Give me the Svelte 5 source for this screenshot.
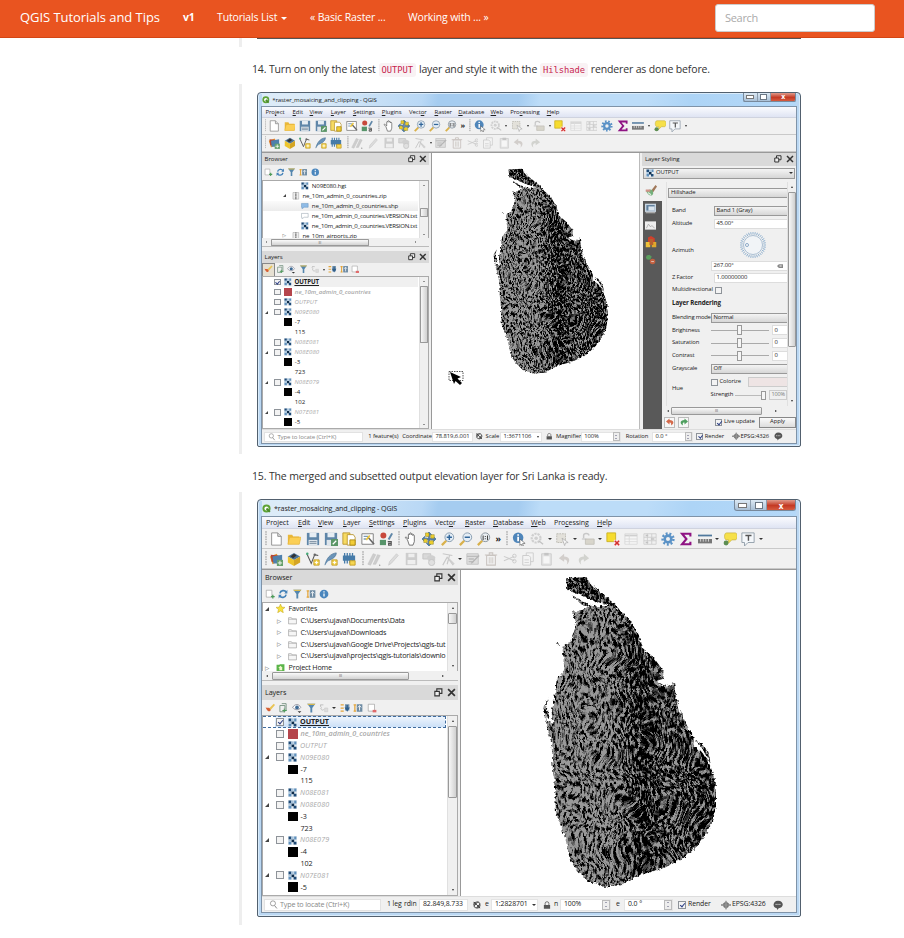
<script>
  const paths = {
    doc: '<path d="M3 1h7l4 4v10H3z" fill="#fff" stroke="#8a8a8a"/><path d="M10 1v4h4" fill="#ddd" stroke="#8a8a8a"/>',
    folder: '<path d="M1 3h5l1 2h7v9H1z" fill="#e9b83a"/><path d="M1 14l2-8h13l-2 8z" fill="#fbcf55" stroke="#e3ad2c" stroke-width=".6"/>',
    save: '<path d="M1 1h14v14H1z" fill="#5f86a8"/><path d="M4 1h8v5H4z" fill="#e6edf3"/><path d="M3 9h10v6H3z" fill="#dfe6ec"/><path d="M4 11h8M4 13h8" stroke="#6c8296"/>',
    saveas: '<path d="M1 1h14v14H1z" fill="#5f86a8"/><path d="M4 1h8v5H4z" fill="#e6edf3"/><path d="M3 9h10v6H3z" fill="#dfe6ec"/><path d="M8 8h8v8H8z" fill="#5c9667"/><path d="M10 14l4-4" stroke="#fff" stroke-width="1.5"/>',
    layout: '<path d="M1 1h8v13H1z" fill="#f7db63" stroke="#b9962d"/><path d="M6 3h7l2 3v9H6z" fill="#fff" stroke="#b9962d"/><path d="M9 9h6v6H9z" fill="#f2cd36" stroke="#a98816"/>',
    layoutmgr: '<path d="M1 2h13v12H1z" fill="#fff" stroke="#777"/><path d="M3 5h5M3 8h3" stroke="#7c9bb5" stroke-width="1.5"/><path d="M8 6l7 8" stroke="#666" stroke-width="1.800"/><path d="M6 9l4-5" stroke="#e9c33a" stroke-width="2"/>',
    style: '<circle cx="5" cy="4" r="3.4" fill="#c8493c"/><path d="M1 9h7v6H1z" fill="#57946a"/><path d="M10 8l4-7 2 1-4 7z" fill="#6087a8"/><path d="M10 11h4v4h-3v-2h3" fill="none" stroke="#555" stroke-width="1.3"/>',
    hand: '<path d="M4 9L2 7c-1-1 0-2 1-1l2 2V3c0-1.300 1.500-1.300 1.600 0V2c0-1.400 1.800-1.400 1.800 0v1c0-1.300 1.700-1.200 1.700 0v1c0-1.200 1.700-1.200 1.700.2V11l-1.500 4H6z" fill="#fff" stroke="#555" stroke-width=".9"/>',
    pan: '<path d="M8 0l3 3H9v3H7V3H5zM8 16l3-3H9v-3H7v3H5zM0 8l3-3v2h3v2H3v2zM16 8l-3-3v2h-3v2h3v2z" fill="#4f7ca6" stroke="#4f7ca6"/><path d="M4 1h4v4H4zM10 3h4v4h-4zM2 8h4v4H2zM8 10h5v4H8z" fill="#efd02b" stroke="#8d8530" stroke-width=".6"/><path d="M6 8h4M8 6v4" stroke="#486e92" stroke-width="1.500"/>',
    zin: '<path d="M1 15l5-5" stroke="#d9b14b" stroke-width="2.600"/><circle cx="9.500" cy="6" r="5" fill="#e5eef6" stroke="#7f95a8"/><path d="M6.500 6h6M9.500 3v6" stroke="#31669a" stroke-width="1.700"/>',
    zout: '<path d="M1 15l5-5" stroke="#d9b14b" stroke-width="2.600"/><circle cx="9.500" cy="6" r="5" fill="#e5eef6" stroke="#7f95a8"/><path d="M6.500 6h6" stroke="#31669a" stroke-width="1.700"/>',
    znat: '<path d="M1 15l5-5" stroke="#d9b14b" stroke-width="2.600"/><circle cx="9.500" cy="6" r="5" fill="#e9eef2" stroke="#7f8a94"/><path d="M7 4v5M12 4v5M9.500 4.500v1.200M9.500 7.200v1.200" stroke="#444" stroke-width="1.200"/>',
    info: '<circle cx="7" cy="6.500" r="6" fill="#4f86ba"/><path d="M7 5.500v5M7 2.500v1.700" stroke="#fff" stroke-width="2"/><path d="M9 8l6 5-3 .3 1 2.700-1.500.3-1-2.500-1.500 1.500z" fill="#fff" stroke="#555" stroke-width=".7"/>',
    gearq: '<circle cx="7" cy="7" r="5" fill="none" stroke="#cfcfcf" stroke-width="2.500" stroke-dasharray="2.500 1"/><circle cx="7" cy="7" r="2" fill="#d0d0d0"/><path d="M10 10l5 4" stroke="#c2c2c2" stroke-width="1.500"/>',
    select: '<path d="M2 2h10v10H2z" fill="#e3e1da" stroke="#b9b7b0" stroke-dasharray="2 1"/><path d="M8 7l7 5-3 .5-1 3z" fill="#f8f8f8" stroke="#aaa" stroke-width=".8"/>',
    selval: '<path d="M3 7V4c0-3 6-3 6 0" fill="none" stroke="#c8c8c8" stroke-width="1.700"/><path d="M5 8h10v6H5z" fill="#d8d5cb" stroke="#c2c0b8"/><path d="M1 8h5" stroke="#bbb"/>',
    desel: '<path d="M1 1h10v10H1z" fill="#f6dc2e" stroke="#c9b021"/><path d="M9 9h7v7H9z" fill="#fbe9e9"/><path d="M10 10l5 5M15 10l-5 5" stroke="#d3302f" stroke-width="1.700"/>',
    table: '<path d="M1 2h14v12H1z" fill="#f5f5f5" stroke="#d9d9d9"/><path d="M1 4h14" stroke="#cfcfcf" stroke-width="2"/><path d="M1 8h14M1 11h14M6 3v11" stroke="#dadada"/>',
    calc: '<path d="M1 2h14v12H1z" fill="#f0f0f0" stroke="#cfcfcf"/><path d="M1 6h14M1 10h14M5 2v12M10 2v12" stroke="#ccc"/><path d="M3 4h3M9 8h4M3 12h3" stroke="#c2c2c2" stroke-width="1.500"/>',
    gear: '<circle cx="8" cy="8" r="6.200" fill="none" stroke="#5b92c6" stroke-width="2.800" stroke-dasharray="2.200 2.100"/><circle cx="8" cy="8" r="3.800" fill="none" stroke="#5b92c6" stroke-width="3"/>',
    sigma: '<path d="M13 5V2H3.500l5 6-5 6H13v-3" fill="none" stroke="#8f1383" stroke-width="2.400"/>',
    measure: '<path d="M0 4h16" stroke="#4f789d" stroke-width="2"/><path d="M0 8h16v5H0z" fill="#777"/><path d="M3 8v3M6 8v3M9 8v3M12 8v3" stroke="#ddd"/>',
    tip: '<path d="M4 1h10c3 0 3 8 0 8h-4l-4 4 .5-4H4C1 9 1 1 4 1z" fill="#f6e04a" stroke="#c8b13c" stroke-width=".8"/><circle cx="3.500" cy="12.500" r="2.800" fill="#5d8d52"/>',
    text: '<path d="M1 1h14v11H8l-4 4v-4H1z" fill="#f4f7fa" stroke="#8d9aa6"/><path d="M5 4h7M8.500 4v6" stroke="#555" stroke-width="1.600"/>',
    datasrc: '<path d="M1 5l8-3 3 8-8 4z" fill="#e8952b"/><path d="M2 3l9 1 1 8-9-1z" fill="#b54434"/><path d="M4 5l11-2v10H5z" fill="#4e80ac"/><path d="M9 9h7v7H9z" fill="#66a06c"/><path d="M12.500 10v5M10 12.500h5" stroke="#fff"/>',
    cube: '<path d="M1 5l7-4 7 4-7 4z" fill="#4e7598"/><path d="M1 5l7 4v7l-7-4z" fill="#edc52e"/><path d="M15 5L8 9v7l7-4z" fill="#d4a524"/><path d="M4 5l4-3 3 2-4 3z" fill="#333"/>',
    vec: '<path d="M1 2l5 11 4-10 4 1" fill="none" stroke="#555" stroke-width="1.200"/><circle cx="1.500" cy="2" r="1.400" fill="#4a7"/><circle cx="10" cy="3" r="1.400" fill="#666"/><path d="M9 9h6v6H9z" fill="#f5d653" stroke="#c39b20"/><path d="M12 10v4M10 12h4" stroke="#fff"/>',
    feather: '<path d="M1 15C3 7 7 2 14 1c0 5-5 7-9 9" fill="#6b94b8" stroke="#4b7397" stroke-width=".8"/><path d="M9 9h6v6H9z" fill="#f5d653" stroke="#c39b20"/><path d="M12 10v4M10 12h4" stroke="#fff"/>',
    chip: '<path d="M1 4h14v6H1z" fill="#477ca9"/><path d="M3 1v12M6 1v12M9 1v12M12 1v12" stroke="#477ca9" stroke-width="1.500"/><path d="M9 10h6v5H9z" fill="#f5d653" stroke="#c39b20"/>',
    pens: '<path d="M1 14l6-12 3 1-6 12zM7 14l5-11 3 1-5 10z" fill="#cdcdcd" stroke="#c0c0c0" stroke-width=".6"/><circle cx="14.500" cy="15" r=".8" fill="#888"/>',
    pen: '<path d="M3 15l1-4 8-9 2 2-8 9z" fill="#dcdcdc" stroke="#c8c8c8" stroke-width=".8"/>',
    gsave: '<path d="M2 1h13v14H2z" fill="#cdcdcd"/><path d="M5 2h7v4H5zM4 9h9v5H4z" fill="#eee"/>',
    gcombo: '<path d="M1 2h9v6H1z" fill="#d9d9d9" stroke="#c4c4c4"/><path d="M6 6c0-3 8-3 9 0v4H7z" fill="#d0d0d0"/><circle cx="11" cy="12" r="3.500" fill="#e0e0e0" stroke="#c4c4c4"/>',
    gnode: '<path d="M2 2l11 2M2 15l5-9 7 9M10 3l-3 11" stroke="#c8c8c8" stroke-width="1.300" fill="none"/><path d="M9 8l6 6" stroke="#d0d0d0" stroke-width="2"/>',
    gform: '<path d="M1 2h13v12H1z" fill="#dedede" stroke="#c2c2c2"/><path d="M1 5h13M3 8h6M3 11h6" stroke="#bcbcbc" stroke-width="1.500"/><path d="M6 13l9-9" stroke="#b5b5b5" stroke-width="1.600"/>',
    trash: '<path d="M3 4h10v11H3zM1 3.500h14M6 3V1h4v2" fill="none" stroke="#c9c4c0" stroke-width="1.200"/><path d="M6 6v7M8 6v7M10 6v7" stroke="#cfcac6"/>',
    cut: '<path d="M1 5l12 5M1 10l12-5" stroke="#ccc" stroke-width="1.200"/><circle cx="13" cy="4.500" r="2" fill="none" stroke="#c8c8c8"/><circle cx="13" cy="10.500" r="2" fill="none" stroke="#c8c8c8"/>',
    copy: '<path d="M6 1h8v10H6z" fill="#f3f3f3" stroke="#ccc"/><path d="M2 4h7l2 2v9H2z" fill="#f3f3f3" stroke="#c8c8c8"/><path d="M4 9h5M4 12h5" stroke="#d0d0d0"/>',
    paste: '<path d="M3 2h11v13H3z" fill="#e3e3e3" stroke="#ccc"/><path d="M5 5h7v8H5z" fill="#f6f6f6"/><path d="M6 1h5v3H6z" fill="#c4c4c4"/>',
    undo: '<path d="M7 2L1 7l6 4V8.500c4 0 4 3 3 6 5-5 3-9.500-3-9.500z" fill="#d2cecb"/>',
    redo: '<path d="M9 2l6 5-6 4V8.500c-4 0-4 3-3 6C1 9.500 3 5 9 5z" fill="#d2d3cf"/>',
    add: '<path d="M2 2h9v11H2z" fill="#fff" stroke="#999"/><path d="M12.500 9v6M9.500 12h6" stroke="#4c9b58" stroke-width="2"/>',
    refresh: '<path d="M3 7c1-5 8-6 10-2M13 9c-1 5-8 6-10 2" fill="none" stroke="#4582b8" stroke-width="2.600"/><path d="M15 1v6h-5zM1 15V9h5z" fill="#4582b8"/>',
    filter: '<path d="M2 1h13L10 8v7H7V8z" fill="#5486ae"/><path d="M2 1h13l-1.500 2h-10z" fill="#d9b94d"/>',
    collapse: '<path d="M1 3h4M1 13h4M3 3v10" stroke="#e2a43a" stroke-width="2"/><path d="M6 2h9v12H6z" fill="#6e8ba3"/><path d="M10.500 12V5M8 7l2.500-3L13 7" stroke="#fff" stroke-width="1.400" fill="none"/>',
    expand: '<path d="M1 3h5M1 8h5M1 13h5" stroke="#e2a43a" stroke-width="2"/><path d="M8 2h7v10H8z" fill="#7392ab"/><path d="M11.500 3v8M9 8l2.500 4L14 8z" stroke="#2f5f8c" stroke-width="2" fill="#2f5f8c"/>',
    about: '<circle cx="8" cy="8" r="7" fill="#4a86bd"/><path d="M8 7v5M8 3.500v2" stroke="#fff" stroke-width="2"/>',
    brush: '<path d="M6 9l8-8 2 2-7 8z" fill="#e9c454"/><path d="M1 7c3 1 4 0 6 1l2 3c-1 4-5 3-8-4z" fill="#d65f35"/>',
    brushg: '<path d="M7 9l7-9 2 2-6 9z" fill="#a0785a"/><path d="M1 7c3 1 5-3 9 0l1 4c-1 5-7 4-10-4z" fill="#74b07c"/><path d="M1 6h6v3H1z" fill="#cf9389"/><path d="M4 10l4 3" stroke="#dfeee0" stroke-width="1.500"/>',
    group: '<path d="M3 4h8v10H3zM6 1h7v11" fill="none" stroke="#6a8a78" stroke-width="1.300"/><path d="M10 9v6M7 12h7" stroke="#4c9b58" stroke-width="1.600"/>',
    eye: '<path d="M1 7c4-6 10-6 13 0-3 5-9 5-13 0z" fill="#fff" stroke="#667"/><circle cx="8" cy="7" r="3" fill="#3e6b95"/><path d="M9 13h6l-3 3z" fill="#333"/>',
    eps: '<path d="M3 3c-3 3 3 4 0 5 0 4 4 4 5 2M2 3h5" fill="none" stroke="#bdbdbd" stroke-width="1.500"/><path d="M9 8h5v6H9z" fill="#ddd" stroke="#ccc"/>',
    remove: '<path d="M2 2h10v11H2z" fill="#fff" stroke="#999"/><path d="M9 11h6v4H9z" fill="#e06a6a"/>',
    raster: '<path d="M0 0h16v16H0z" fill="#e3ebf2"/><path d="M1 1h5v5H1zM10 10h5v5h-5z" fill="#1f4b77"/><path d="M6 6h5v5H6z" fill="#0e2c4a"/><path d="M11 1h4v5h-4zM1 10h5v5H1z" fill="#5f8fbb"/><path d="M6 1h4v5H6zM1 6h5v4H1z" fill="#a9c4dc"/>',
    zip: '<path d="M2 1h12v14H2z" fill="#eee" stroke="#999"/><path d="M8 1v14" stroke="#666" stroke-width="3" stroke-dasharray="2 1"/>',
    shp: '<path d="M1 3h14v8H7l-5 3v-3H1z" fill="#8fbbe6" stroke="#5f8fbe"/>',
    bubble: '<path d="M1 3h14v8H7l-5 3v-3H1z" fill="#fff" stroke="#8a98a5"/>',
    star: '<path d="M8 0l2.300 5.500L16 6l-4.400 3.800L13 15.500l-5-3.100-5 3.100 1.400-5.700L0 6l5.700-.5z" fill="#f7e23c" stroke="#c3a41e" stroke-width=".9"/>',
    fold: '<path d="M1 3h5l1 2h8v9H1z" fill="#f6f6f6" stroke="#8f8f8f"/><path d="M1 6h14" stroke="#aaa"/>',
    home: '<path d="M1 3h5l1-1h8v12H1z" fill="#5bb54a"/><path d="M8 5l4 4h-1v4H6V9H4z" fill="#f2f7d0"/>',
    lock: '<path d="M3 8h10v6H3z" fill="#555"/><path d="M5 8V5c0-3 6-3 6 0v3" fill="none" stroke="#777" stroke-width="1.600"/>',
    track: '<path d="M2 3h5v5H2zM8 8h5v5H8z" fill="#999"/><circle cx="8" cy="8" r="5" fill="none" stroke="#555" stroke-width="1.500"/><path d="M3 3l10 10M3 10l7-8M7 13l6-7" stroke="#333" stroke-width="1.200"/>',
    globe: '<path d="M8 2l5 4-1 5-4 3-4-3-1-5z" fill="#777"/><path d="M0 8h16" stroke="#888" stroke-width="2.500"/><path d="M8 1v14" stroke="#999" stroke-width="2"/>',
    msg: '<path d="M8 1c10 0 10 12 1 12l-2 3-1-3C-2 12 0 1 8 1z" fill="#555"/><path d="M4 7h8" stroke="#ddd" stroke-width="1.500" stroke-dasharray="2 1"/>',
    lens: '<circle cx="7" cy="6" r="4.500" fill="none" stroke="#777" stroke-width="1.200"/><path d="M10 10l4 5" stroke="#777" stroke-width="1.500"/>',
    float: '<path d="M5 1.500h9v8H5z" fill="#eee" stroke="#333" stroke-width="2"/><path d="M1.500 6h8v8h-8z" fill="#eee" stroke="#333" stroke-width="2"/>',
    close: '<path d="M2 2l12 12M14 2L2 14" stroke="#333" stroke-width="3"/>',
    logo: '<circle cx="8" cy="8" r="5.500" fill="#fff" stroke="#5da336" stroke-width="3.500"/><path d="M8 8l6 6" stroke="#4c8a2b" stroke-width="3.500"/>',
    monitor: '<path d="M0 1h16v12H0z" fill="#c8d6e2"/><path d="M2 3h12v8H2z" fill="#5d7d9b"/><path d="M5 5h9v6H5z" fill="#dbe6ef"/><path d="M1 14h14" stroke="#aaa" stroke-width="2"/>',
    hist: '<path d="M0 2h16v12H0z" fill="#eee"/><path d="M2 12l3-6 3 4 2-2 4 4" fill="none" stroke="#999"/>',
    cubes: '<path d="M4 2l4-2 5 3v5H4z" fill="#d0402c"/><path d="M1 8h6v7H1z" fill="#efc23a"/><path d="M9 8h6v7H9z" fill="#e0a92c"/><path d="M6 4h5v8H6z" fill="#b8622e"/>',
    arrows: '<path d="M1 5l5-4 4 3-3 4z" fill="#5a9e5e"/><circle cx="5" cy="5" r="3.500" fill="#5a9e5e"/><circle cx="11" cy="11" r="4" fill="#c26040"/><path d="M9 11h4" stroke="#eee"/>',
    redback: '<path d="M7 1L0 7l7 6V9c3 0 4 2 3 6 8-5 5-11-3-11z" fill="#d4694a"/>',
    greenfwd: '<path d="M9 1l7 6-7 6V9C5 9 5 11 6 15-2 10 1 4 9 4z" fill="#4f9f5f"/>',
    bksp: '<path d="M0 8l5-5h11v10H5z" fill="#888"/><path d="M7 5.500l5 5M12 5.500l-5 5" stroke="#fff" stroke-width="1.500"/>'
  };

  const menu = [
    { a: 'Pro', u: 'j', b: 'ect', w: 32 }, { a: '', u: 'E', b: 'dit', w: 20 }, { a: '', u: 'V', b: 'iew', w: 25 },
    { a: '', u: 'L', b: 'ayer', w: 26 }, { a: '', u: 'S', b: 'ettings', w: 34 }, { a: '', u: 'P', b: 'lugins', w: 32 },
    { a: 'Vect', u: 'o', b: 'r', w: 30 }, { a: '', u: 'R', b: 'aster', w: 28 }, { a: '', u: 'D', b: 'atabase', w: 38 },
    { a: '', u: 'W', b: 'eb', w: 23 }, { a: 'Pro', u: 'c', b: 'essing', w: 43 }, { a: '', u: 'H', b: 'elp', w: 20 }
  ];
  const bar1 = '| doc folder save saveas layout layoutmgr style | hand pan zin zout znat » | info gearq v select v selval v desel table calc gear sigma measure v tip text v'.split(' ');
  const bar2 = '| datasrc cube vec feather chip | pens pen gsave gcombo gnode v gform trash cut copy paste undo redo'.split(' ');

  const tree1 = [
    { d: 45, i: 'raster', t: 'N09E080.hgt' },
    { d: 34, x: 'open', i: 'zip', t: 'ne_10m_admin_0_countries.zip' },
    { d: 45, i: 'shp', t: 'ne_10m_admin_0_countries.shp', sel: true },
    { d: 45, i: 'bubble', t: 'ne_10m_admin_0_countries.VERSION.txt', long: true },
    { d: 45, i: 'raster', t: 'ne_10m_admin_0_countries.VERSION.txt', long: true },
    { d: 34, x: 'shut', i: 'zip', t: 'ne_10m_airports.zip' }
  ];
  const tree2 = [
    { d: 13, x: 'open', i: 'star', t: 'Favorites' },
    { d: 25, x: 'shut', i: 'fold', t: 'C:\\Users\\ujaval\\Documents\\Data' },
    { d: 25, x: 'shut', i: 'fold', t: 'C:\\Users\\ujaval\\Downloads' },
    { d: 25, x: 'shut', i: 'fold', t: 'C:\\Users\\ujaval\\Google Drive\\Projects\\qgis-tut' },
    { d: 25, x: 'shut', i: 'fold', t: 'C:\\Users\\ujaval\\projects\\qgis-tutorials\\downlo' },
    { d: 13, x: 'shut', i: 'home', t: 'Project Home' }
  ];
  const layers = [
    { k: 'top', t: 'OUTPUT' }, { k: 'vec', t: 'ne_10m_admin_0_countries' }, { k: 'ras', t: 'OUTPUT' },
    { k: 'ras', t: 'N09E080', x: true }, { k: 'blk', t: '-7' }, { k: 'num', t: '115' }, { k: 'ras', t: 'N08E081' },
    { k: 'ras', t: 'N08E080', x: true }, { k: 'blk', t: '-3' }, { k: 'num', t: '723' },
    { k: 'ras', t: 'N08E079', x: true }, { k: 'blk', t: '-4' }, { k: 'num', t: '102' },
    { k: 'ras', t: 'N07E081', x: true }, { k: 'blk', t: '-5' }
  ];
  const status1 = [
    { t: '1 feature(s)', w: 40 }, { t: 'Coordinate', w: 35 }, { t: '78.819,6.001', w: 48, box: true }, { i: 'track', w: 15 },
    { t: 'Scale', w: 17 }, { t: '1:3671106', w: 50, box: true, dd: true }, { i: 'lock', w: 16 }, { t: 'Magnifier', w: 29 },
    { t: '100%', w: 47, box: true, spin: true }, { t: 'Rotation', w: 31, ml: 6 }, { t: '0.0 °', w: 48, box: true, spin: true },
    { c: true, w: 10, ml: 4 }, { t: 'Render', w: 31 }, { i: 'globe', w: 11 }, { t: 'EPSG:4326', w: 38 }, { i: 'msg', w: 14 }
  ];
  const status2 = [
    { t: '1 leg', w: 17 }, { t: 'rdin', w: 15 }, { t: '82.849,8.733', w: 49, box: true }, { i: 'track', w: 17 },
    { t: 'e', w: 6 }, { t: '1:2828701', w: 47, box: true, dd: true }, { i: 'lock', w: 15, ml: 1 }, { t: 'n', w: 6 },
    { t: '100%', w: 51, box: true, spin: true }, { t: 'e', w: 8, ml: 5 }, { t: '0.0 °', w: 49, box: true, spin: true },
    { c: true, w: 10, ml: 5 }, { t: 'Render', w: 32 }, { i: 'globe', w: 12 }, { t: 'EPSG:4326', w: 39 }, { i: 'msg', w: 14 }
  ];
  const rays = Array.from({ length: 36 }, (_, i) => i * 10);
</script>

{#snippet icon(name, size = 15)}
  <svg class="ic" width={size} height={size} viewBox="0 0 16 16">{@html paths[name]}</svg>
{/snippet}

{#snippet bar(items)}
  <div class="toolbar">
    {#each items as it}
      {#if it === '|'}<i class="grip"></i>
      {:else if it === 'v'}<i class="dd"></i>
      {:else if it === '»'}<b class="more">»</b>
      {:else}<span class="tb">{@render icon(it, 14)}</span>{/if}
    {/each}
  </div>
{/snippet}

{#snippet head(title)}
  <div class="head"><span>{title}</span>{@render icon('float', 9)}{@render icon('close', 9)}</div>
{/snippet}

{#snippet island(id, w)}
  <svg class="island" width={w} height={w * 975 / 660} viewBox="0 0 660 975">
    <defs>
      <linearGradient id="tone{id}" x1="0" y1="0.04" x2="1" y2="0">
        <stop offset="0" stop-color="#a0a0a0" /><stop offset=".36" stop-color="#989898" />
        <stop offset=".5" stop-color="#5c5c5c" /><stop offset=".56" stop-color="#464646" />
        <stop offset=".68" stop-color="#707070" /><stop offset="1" stop-color="#484848" />
      </linearGradient>
      <filter id="relief{id}" x="0" y="0" width="660" height="975" filterUnits="userSpaceOnUse" color-interpolation-filters="sRGB">
        <feTurbulence type="fractalNoise" baseFrequency=".14 .06" numOctaves="3" seed="7" result="n" />
        <feTurbulence type="fractalNoise" baseFrequency=".008" numOctaves="2" seed="3" result="w" />
        <feDisplacementMap in="n" in2="w" scale="90" xChannelSelector="R" yChannelSelector="G" result="d" />
        <feColorMatrix in="d" values="1 0 0 0 0 1 0 0 0 0 1 0 0 0 0 0 0 0 0 1" result="g" />
        <feComposite in="g" in2="SourceGraphic" operator="arithmetic" k2="1" k3=".42" k4="-.22" result="s" />
        <feComponentTransfer in="s" result="t">
          <feFuncR type="linear" slope="4.500" intercept="-1.700" /><feFuncG type="linear" slope="4.500" intercept="-1.700" /><feFuncB type="linear" slope="4.500" intercept="-1.700" />
          <feFuncA type="linear" slope="0" intercept="1" />
        </feComponentTransfer>
        <feComponentTransfer in="t" result="u">
          <feFuncR type="table" tableValues="0 .3 .6" /><feFuncG type="table" tableValues="0 .3 .6" /><feFuncB type="table" tableValues="0 .3 .6" />
        </feComponentTransfer>
        <feTurbulence type="fractalNoise" baseFrequency=".1" numOctaves="2" seed="9" result="e" />
        <feDisplacementMap in="SourceGraphic" in2="e" scale="14" xChannelSelector="R" yChannelSelector="G" result="edge" />
        <feComposite in="u" in2="edge" operator="in" />
      </filter>
    </defs>
    <path filter="url(#relief{id})" fill="url(#tone{id})"
      d="M155 125L180 122 205 108 280 108 310 130 335 158 358 200 365 232 400 262 430 302 430 328 410 335 440 350 462 338 467 375 480 420 500 465 520 500 522 530 550 545 572 590 587 640 588 700 580 750 560 790 530 830 490 865 430 895 360 915 300 946 250 950 200 930 170 900 150 870 135 800 108 730 105 650 98 590 95 520 75 450 100 462 95 430 103 380 110 330 133 300 128 230 150 215 170 160ZM155 76L215 105 190 108ZM86 385L70 412 78 450 88 440 78 412ZM525 512L545 520 565 548 572 580 550 540ZM108 218l10 6-8 2z" />
    <path filter="url(#relief{id})" fill="#505050" d="M138 25L200 22 218 48 272 92 300 116 225 94 180 75 142 60Z" />
    <path d="M155 70L185 84 222 96 262 103 240 106 215 101 190 96ZM205 28l34 40-30-28zM410 332l22-6 6 12-14 4zM470 385l14 45-8-3zM520 520l24 12 24 42-26-32z" fill="#fff" />
  </svg>
{/snippet}

{#snippet layerStyling()}
  <aside class="styling">
    <div class="shead"><span>Layer Styling</span>{@render icon('float', 8)}{@render icon('close', 8)}</div>
    <div class="combo src">{@render icon('raster', 8)}<span>OUTPUT</span><i class="dd"></i></div>
    <div class="sbody">
      <div class="stabs">
        <span class="on">{@render icon('brushg', 12)}</span>
        <span>{@render icon('monitor', 11)}</span><span>{@render icon('hist', 11)}</span>
        <span>{@render icon('cubes', 12)}</span><span>{@render icon('arrows', 11)}</span>
      </div>
      <div class="smain">
        <div class="sscroll">
          <div class="form">
            <div class="combo kind">Hillshade</div>
            <div class="row" style:height="13px"><label>Band</label><div class="combo f">Band 1 (Gray)</div></div>
            <div class="row" style:height="13px"><label>Altitude</label><div class="inp f">45.00°</div></div>
            <div class="row" style:height="41px"><label>Azimuth</label>
              <div class="azi">
                <svg width="28" height="28" viewBox="-14 -14 28 28">
                  {#each rays as r}<path d="M10.500 0h2.500" stroke="#6f9bc4" stroke-width=".7" transform="rotate({r})" />{/each}
                  <circle r="9.500" fill="#f1f4f7" stroke="#9bb3ca" stroke-width=".8" /><circle cx="-6" cy="0" r="1.500" fill="#fff" stroke="#5d87b0" stroke-width=".7" />
                </svg>
                <div class="inp wide"><span>267.00°</span>{@render icon('bksp', 6)}</div>
              </div>
            </div>
            <div class="row" style:height="13px"><label>Z Factor</label><div class="inp f">1.00000000</div></div>
            <div class="row" style:height="11px"><label>Multidirectional</label><i class="chk"></i></div>
            <div class="grp">Layer Rendering</div>
            <div class="row" style:height="13px"><label class="tight">Blending mode</label><div class="combo w">Normal</div></div>
            {#each ['Brightness', 'Saturation', 'Contrast'] as s}
              <div class="row" style:height="12.7px"><label>{s}</label><div class="slider"><i></i></div><div class="inp n">0</div></div>
            {/each}
            <div class="row" style:height="13px"><label>Grayscale</label><div class="combo w">Off</div></div>
            <div class="row" style:height="27px"><label>Hue</label>
              <div class="hue">
                <div><i class="chk"></i><span>Colorize</span><b class="swatch"></b></div>
                <div><span>Strength</span><span class="line"><i></i></span><span class="pct">100%</span></div>
              </div>
            </div>
          </div>
          <div class="vs right"><i class="up"></i><b style:height="155px"></b><i class="down"></i></div>
        </div>
        <div class="hs"><i class="l"></i><b style:width="91px">III</b><i class="r"></i></div>
        <div class="apply">
          <span class="sq">{@render icon('redback', 8)}</span><span class="sq">{@render icon('greenfwd', 8)}</span>
          <i class="chk on"></i><span class="live">Live update</span><span class="btn">Apply</span>
        </div>
      </div>
    </div>
  </aside>
{/snippet}

{#snippet qgis(n, tree, status, styling)}
  <section class="win w{n}">
    <header class="z title">{@render icon('logo', 9)}<span>*raster_mosaicing_and_clipping - QGIS</span>
      <div class="ctl"><i class="mn"></i><i class="mx"></i><i class="cl">x</i></div>
    </header>
    <div class="inner">
      <div class="z chrome">
        <nav class="menu">{#each menu as m}<span style:width="{m.w}px">{m.a}<u>{m.u}</u>{m.b}</span>{/each}</nav>
        {@render bar(bar1)}
        {@render bar(bar2)}
      </div>
      <div class="work">
        <aside class="z dock">
          {@render head('Browser')}
          <div class="mini b">{#each ['add', 'refresh', 'filter', 'collapse', 'about'] as i}<span>{@render icon(i, 10)}</span>{/each}</div>
          <div class="tree">
            <div class="rows">
              {#each tree as r}
                <div class="r" class:sel={r.sel} class:long={r.long} style:padding-left="{r.d}px">
                  <i class="x {r.x ?? ''}" style:margin-left="-11px"></i>{@render icon(r.i, 9)}<span>{r.t}</span>
                </div>
              {/each}
            </div>
            <div class="vs"><i class="up"></i><b style:height="11px" style:margin-top={n === 1 ? '22px' : '0'}></b><i class="down"></i></div>
          </div>
          <div class="hs"><i class="l"></i><b style:width={n === 1 ? '116px' : '137px'}>III</b><i class="r"></i></div>
          <div class="gap"></div>
          {@render head('Layers')}
          <div class="mini">
            {#each ['brush', 'group', 'eye', 'filter', 'eps', 'v', 'expand', 'collapse', 'remove'] as i, k}
              {#if i === 'v'}<i class="dd"></i>{:else}<span class:press={n === 1 && k === 0}>{@render icon(i, 10)}</span>{/if}
            {/each}
          </div>
          <div class="list">
            <div class="rows">
              {#each layers as l}
                <div class="r lay {l.k}">
                  <i class="x" class:open={l.x}></i>
                  {#if l.k === 'blk' || l.k === 'num'}<i class="nochk"></i><i class="sw {l.k}"></i>
                  {:else}<i class="chk" class:on={l.k === 'top'}></i>{#if l.k === 'vec'}<i class="sw red"></i>{:else}{@render icon('raster', 9)}{/if}{/if}
                  <span>{l.t}</span>
                </div>
              {/each}
            </div>
            <div class="vs"><i class="up"></i><b style:height={n === 1 ? '68px' : '72px'}></b><i class="down"></i></div>
          </div>
        </aside>
        <div class="map">
          {@render island(n, n === 1 ? 145.6 : 220)}
          {#if n === 1}
            <svg class="cursor" width="17" height="17" viewBox="0 0 17 17"><path d="M1 1.500h14v9H1z" fill="none" stroke="#555" stroke-dasharray="1.500 1" /><path d="M2 2l11 5-3.500 1.500L14 13l-2 2-4.500-4L6 14z" /></svg>
          {/if}
        </div>
        {#if styling}{@render styling()}{/if}
      </div>
      <footer class="z status">
        <div class="loc">{@render icon('lens', 9)}<span>Type to locate (Ctrl+K)</span></div>
        {#each status as s}
          <div class="si" class:box={s.box} style:width="{s.w}px" style:margin-left="{s.ml ?? 0}px">
            {#if s.i}{@render icon(s.i, 10)}{:else if s.c}<i class="chk on"></i>{:else}<span>{s.t}</span>{/if}
            {#if s.dd}<i class="dd"></i>{/if}{#if s.spin}<i class="spin"></i>{/if}
          </div>
        {/each}
      </footer>
    </div>
  </section>
{/snippet}

<div class="page">
  <nav class="navbar">
    <a class="brand">QGIS Tutorials and Tips</a>
    <b class="ver">v1</b>
    <a class="n1">Tutorials List <i class="caret"></i></a>
    <a class="n2">« Basic Raster ...</a>
    <a class="n3">Working with ... »</a>
    <input placeholder="Search" />
  </nav>
  <main>
    <div class="quote prev"><div></div></div>
    <p class="p14">14. Turn on only the latest <code>OUTPUT</code> layer and style it with the <code>Hilshade</code> renderer as done before.</p>
    <div class="quote q1">{@render qgis(1, tree1, status1, layerStyling)}</div>
    <p class="p15">15. The merged and subsetted output elevation layer for Sri Lanka is ready.</p>
    <div class="quote q2">{@render qgis(2, tree2, status2, null)}</div>
  </main>
</div>

<style>
  :global(body) { margin: 0; background: #fff; overflow: hidden; }
  .page { width: 904px; height: 938px; overflow: hidden; font-family: "Open Sans", "Noto Sans", sans-serif; color: #333; }
  .page :global(*) { box-sizing: border-box; }
  i { font-style: normal; }
  .ic { display: block; flex: none; }
  .navbar { height: 38px; background: #e95420; border-bottom: 1px solid #d34615; display: flex; align-items: center; color: #fff; font-size: 10.5px; padding: 0 29px 3px 20px; white-space: nowrap; letter-spacing: -.15px; }
  .brand { font-size: 13px; width: 163px; letter-spacing: -.05px; }
  .ver { width: 34px; }
  .n1 { width: 93px; } .n2 { width: 98px; }
  .caret { display: inline-block; border: 3px solid transparent; border-top-color: #fff; border-bottom: 0; vertical-align: 1px; margin-left: 1px; }
  input { margin-left: auto; width: 160px; height: 28px; border: 1px solid #ccc; border-radius: 3px; padding: 0 9px 2px; font: 11px "Open Sans", sans-serif; letter-spacing: -.3px; margin-top: 2px; }
  input::placeholder { color: #aaa; }
  main { padding-left: 239px; }
  .quote { border-left: 3px solid #eee; padding-left: 15px; }
  .prev { height: 9px; } .prev div { width: 544px; height: 1px; background: #555; }
  p { margin: 0 0 0 13px; font-size: 10.5px; line-height: 16px; white-space: nowrap; letter-spacing: -.15px; }
  .p14 { height: 37px; padding-top: 14px; }
  .p15 { height: 38px; padding-top: 14px; }
  code { font: 8.800px "DejaVu Sans Mono", monospace; letter-spacing: -.05px; color: #c7254e; background: #f9f2f4; border-radius: 3px; padding: 2px 3px; margin: 0 .3px; }
  .q1 { height: 370px; padding-top: 8px; }
  .q2 { height: 433px; padding-top: 7px; }

  .win { width: 544px; border: 1px solid #52606e; border-radius: 4px 4px 2px 2px; background: #bbd8f3; padding: 0 4px; display: flex; flex-direction: column; box-shadow: inset 0 0 0 1px #d9ebfa; font-size: 7.200px; color: #222; letter-spacing: -.08px; white-space: nowrap; line-height: 1; }
  .w1 { height: 355px; --z: .85; padding-bottom: 3px; }
  .w2 { height: 418px; --z: 1; padding-bottom: 4px; }
  .z { zoom: var(--z); }
  .title { height: 17px; display: flex; align-items: center; gap: 4px; background: linear-gradient(100deg, #dcebf8 0 8%, #b9d8f5 30%, #a5ccf0 33% 48%, #bcdcf8 52% 72%, #add4f6 80%, #b4d8f8); margin-top: 1px; margin-bottom: -1px; }
  .title span { font-size: 7.200px; letter-spacing: -.15px; margin: -2px 0 0 -1px; }
  .title > :global(svg) { margin-top: -2px; }
  .ctl { margin-left: auto; display: flex; align-self: flex-start; height: 11px; border: 1px solid #78899b; border-top: 0; border-radius: 0 0 3px 3px; overflow: hidden; background: linear-gradient(#dce9f4, #a9c0d6); }
  .w2 .ctl { margin-top: -1px; } .w1 .ctl { margin-top: -1px; }
  .ctl i { width: 16px; border-right: 1px solid #8c9dae; display: flex; justify-content: center; align-items: center; }
  .ctl .mn::before { content: ""; width: 7px; height: 3px; border: 1px solid #777; background: #fff; }
  .ctl .mx::before { content: ""; width: 6px; height: 5px; border: 1.500px solid #6b7885; background: #fff; }
  .ctl .cl { width: 28px; background: linear-gradient(#e09a8b, #c43a24 55%, #d65b3f); color: #fff; font: bold 8px/9px "Open Sans"; border: 0; }
  .inner { flex: 1; min-height: 0; display: flex; flex-direction: column; background: #f0f0f0; outline: 1px solid #7f93a8; }
  .chrome { flex: none; }
  .menu { height: 12px; display: flex; align-items: center; padding-left: 4px; background: linear-gradient(#fafbfe, #dfe4f3); border-bottom: 1px solid #cfd3df; font-size: 7.100px; }
  u { text-underline-offset: 1px; text-decoration-thickness: .7px; }
  .toolbar { height: 20px; display: flex; align-items: center; background: #f1f1f1; border-bottom: 1px solid #c9c9c9; }
  .tb { width: 18.350px; display: flex; justify-content: center; flex: none; }
  .grip { width: 6.500px; height: 15px; flex: none; background: radial-gradient(circle at 1px 1px, #bbb .7px, transparent 1px) 3px 0 / 6px 2.500px; background-repeat: repeat-y; }
  .grip:first-child { width: 4.800px; }
  .dd { width: 7px; flex: none; display: flex; justify-content: center; }
  .dd::before { content: ""; border: 2px solid transparent; border-top: 2.500px solid #333; border-bottom: 0; }
  .more { width: 9.500px; text-align: center; font-size: 9px; }
  .work { flex: 1; min-height: 0; display: flex; border-top: 1px solid #999; }
  .dock { width: 196px; display: flex; flex-direction: column; flex: none; overflow: hidden; }
  .head, .shead { height: 15px; flex: none; background: #d9d9d9; display: flex; align-items: center; padding: 0 2px 0 3px; gap: 4px; }
  .head span, .shead span { flex: 1; }
  .mini { height: 15px; flex: none; display: flex; align-items: center; padding-left: 1px; }
  .mini.b { height: 17px; }
  .mini span { width: 13.600px; height: 14px; display: flex; justify-content: center; align-items: center; }
  .mini .press { outline: 1px solid #888; outline-offset: -1px; background: #e6e0d2; }
  .tree { height: 69px; flex: none; display: flex; background: #fff; border: 1px solid #aaa; border-width: 1px 1px 0; }
  .list { flex: 1; min-height: 0; display: flex; background: #fff; border: 1px solid #aaa; }
  .rows { flex: 1; min-width: 0; overflow: hidden; }
  .r { height: 11.800px; display: flex; align-items: center; gap: 3px; margin-right: 1px; overflow: hidden; }
  .r.sel { background: linear-gradient(#fbfbfb, #ececec); }
  .x { width: 8px; flex: none; display: block; }
  .x.open::before { content: ""; display: block; border-left: 4.500px solid transparent; border-bottom: 4.500px solid #444; width: 0; }
  .x.shut::before { content: "▷"; font: 5.500px "DejaVu Sans"; color: #555; display: block; }
  .tree .r span { margin-left: .5px; letter-spacing: -.19px; }
  .tree .r.long { margin-right: 0; }
  .tree .r.long span { letter-spacing: -.31px; }
  .lay { padding-left: 2px; }
  .lay span { margin-left: 0; }
  .chk, .nochk { width: 8px; height: 8px; flex: none; display: block; margin-right: 1px; }
  .chk { border: 1px solid #8e9399; background: #f3f3f3; }
  .chk.on::before { content: ""; display: block; width: 2px; height: 4px; border: solid #2d3f86; border-width: 0 1px 1px 0; transform: rotate(40deg); margin: 0 0 0 1.500px; }
  .sw { width: 9.500px; height: 9.500px; display: block; flex: none; }
  .sw.blk { background: #000; } .sw.red { background: #b5454c; }
  .vec span, .ras span { color: #aaa; font-style: italic; font-weight: 600; }
  .ras span { font-weight: 400; letter-spacing: .1px; }
  .vec span { letter-spacing: 0; }
  .top span { font-weight: 700; text-decoration: underline; }
  .w1 .top { background: linear-gradient(90deg, #fff 12px, #f0f0f0 40px); }
  .w2 .top { background: linear-gradient(90deg, #fff 12px, transparent 12px), linear-gradient(#eef5fd, #cbe0f7); border: 1px dashed #3f6c9e; border-left: 0; }
  .vs { width: 10px; flex: none; display: flex; flex-direction: column; background: #f0f0f0; border-left: 1px solid #e0e0e0; }
  .vs b { background: linear-gradient(90deg, #f7f7f7, #d0d0d0); border: 1px solid #999; border-radius: 1px; flex: none; }
  .vs i { height: 10px; flex: none; display: flex; align-items: center; justify-content: center; }
  .vs i::before { content: ""; border: 1.500px solid transparent; }
  .vs .up::before { border-bottom: 2px solid #333; border-top: 0; }
  .vs .down { margin-top: auto; } .vs .down::before { border-top: 2px solid #333; border-bottom: 0; }
  .hs { height: 10px; flex: none; display: flex; background: #f0f0f0; align-items: center; border-bottom: 1px solid #bbb; }
  .hs b { height: 8px; border: 1px solid #999; background: linear-gradient(#fafafa, #d2d2d2); border-radius: 1px; font: 4px "Open Sans"; text-align: center; color: #555; line-height: 6px; }
  .hs i { width: 10px; display: flex; justify-content: center; }
  .hs i::before { content: ""; border: 1.500px solid transparent; }
  .hs .l::before { border-right: 2px solid #333; border-left: 0; }
  .hs .r { height: auto; margin: 0 0 0 auto; width: 30px; } .hs .r::before { border-left: 2px solid #333; border-right: 0; }
  .gap { height: 4.200px; flex: none; }
  .map { flex: 1; min-width: 0; background: #fff; margin-left: 2px; border-left: 1px solid #999; position: relative; overflow: hidden; }
  .island { display: block; }
  .w1 .island { margin: 11px 0 0 46px; } .w2 .island { margin-left: 59px; }
  .cursor { position: absolute; left: 16px; top: 217px; }
  .status { height: 16px; flex: none; display: flex; align-items: center; padding-left: 2px; border-top: 1px solid #ddd; font-size: 6.900px; }
  .loc { width: 117px; height: 12px; background: #fff; border: 1px solid #e2e2e2; display: flex; align-items: center; gap: 2px; padding-left: 4px; color: #888; margin-right: 6px; flex: none; font-size: 7.200px; letter-spacing: -.18px; }
  .si { display: flex; align-items: center; flex: none; justify-content: flex-start; height: 12px; }
  .si > :global(svg) { margin: 0 auto; }
  .si.box { background: #fff; padding-left: 3px; border: 1px solid #e4e4e4; }
  .si .dd { margin-left: auto; }
  .spin { margin-left: auto; width: 8px; height: 10px; background: #eee; border: 1px solid #bbb; display: flex; flex-direction: column; justify-content: space-around; align-items: center; }
  .spin::before, .spin::after { content: ""; border: 1.500px solid transparent; }
  .spin::before { border-bottom-color: #557; border-top: 0; } .spin::after { border-top-color: #557; border-bottom: 0; }

  .styling { width: 157px; padding-left: 2px; display: flex; flex-direction: column; flex: none; font-size: 5.900px; letter-spacing: -.1px; border-left: 1px solid #bbb; }
  .shead { height: 13px; font-size: 6.100px; }
  .combo { border: 1px solid #999; background: linear-gradient(#f4f4f4, #d6d6d6); display: flex; align-items: center; padding-left: 2px; height: 10px; }
  .src { height: 11px; margin: 2px 1px 3px; gap: 2px; } .src .dd { margin-left: auto; }
  .sbody { flex: 1; display: flex; min-height: 0; padding-left: 1px; }
  .stabs { width: 19px; background: #595959; flex: none; }
  .stabs span { display: flex; height: 17px; align-items: center; justify-content: center; padding-right: 4px; }
  .stabs .on { background: #f0f0f0; height: 19px; margin-bottom: -1px; }
  .smain { flex: 1; min-width: 0; padding-left: 2px; display: flex; flex-direction: column; }
  .sscroll { flex: 1; min-height: 0; display: flex; padding-left: 2px; overflow: hidden; }
  .form { flex: 1; min-width: 0; padding-top: 6px; border-left: 1px solid #e1e1e1; }
  .kind { margin: 0 0 7px 1px; border-right: 0; }
  .row { display: flex; align-items: center; padding-left: 5px; }
  .row label { width: 38.500px; flex: none; letter-spacing: -.15px; }
  .row .tight { letter-spacing: -.22px; }
  .f { flex: 1; margin-left: 3px; } .w, .wide { flex: 1; }
  .combo.f, .combo.w { border-right: 0; }
  .inp { background: #fff; border: 1px solid #ddd; border-right: 0; height: 10px; display: flex; align-items: center; padding-left: 2px; }
  .azi { flex: 1; } .azi > svg { display: block; margin: 0 auto 2px 28px; }
  .wide { justify-content: space-between; padding-right: 4px; }
  .row .chk { width: 7px; height: 7px; margin-left: 4px; }
  .grp { height: 15.500px; padding: 4px 0 0 5px; font-weight: 700; font-size: 6.200px; }
  .slider { width: 58px; height: 10px; background: linear-gradient(#aaa, #aaa) center / 100% 1px no-repeat; display: flex; justify-content: center; }
  .slider i, .line i { width: 5px; height: 10px; border: 1px solid #999; background: #f6f6f6; }
  .n { margin-left: 3px; flex: 1; }
  .hue { flex: 1; min-width: 0; } .hue > div { height: 13px; display: flex; align-items: center; gap: 2px; }
  .hue .chk { margin: 0; } .swatch { flex: 1; height: 10px; margin-left: 5px; background: #eee4e4; border: 1px solid #ccc; border-right: 0; }
  .line { flex: 1; height: 9px; background: linear-gradient(#bbb, #bbb) center / 100% 1px no-repeat; display: flex; justify-content: flex-end; }
  .line i { height: 9px; }
  .pct { border: 1px solid #ccc; color: #777; padding: 1px; margin-left: 1px; font-size: 5.500px; }
  .right { width: 9px; }
  .smain .hs { height: 9px; border: 0; margin-right: 10px; } .smain .hs .l { width: 7px; } .smain .hs .r { width: 20px; }
  .apply { height: 14px; display: flex; align-items: center; flex: none; }
  .sq { width: 11px; height: 11px; border: 1px solid #bbb; background: #f7f7f7; margin-right: 3px; display: flex; align-items: center; justify-content: center; }
  .apply .chk { margin: 0 2px 0 23px; width: 7px; height: 7px; }
  .btn { margin-left: auto; width: 37px; height: 11px; border: 1px solid #888; background: linear-gradient(#fafafa, #ddd); display: flex; align-items: center; justify-content: center; }
</style>
